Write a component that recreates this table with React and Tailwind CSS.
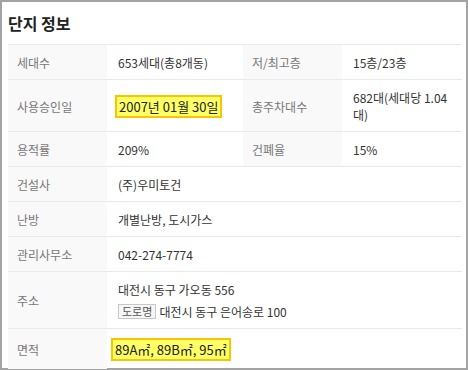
import React from "react"

const font = { fontFamily: '"Noto Sans CJK KR", "Noto Sans", sans-serif' }

const th = "bg-[#f9f9f9] pl-[9px] pr-2 pt-[9px] pb-[8px] text-left font-normal text-[#777] align-middle"
const td = "pl-[11px] pr-2 pt-[9px] pb-[8px] text-[#333] align-middle"

// highlighted value chip
function Mark({ children }) {
  return (
    <span className="inline-block border-2 border-[#f7c600] bg-[#ffff66] px-[2px] text-[13px] leading-[19px] text-[#222]">
      {children}
    </span>
  )
}

export default function App() {
  return (
    <div className="h-[370px] w-[468px] border-2 border-[#a3a3a3] bg-white" style={font}>
      <div className="px-[6px]">
        <h2 className="flex h-[42px] items-center text-[16px] font-bold text-[#222]">단지 정보</h2>
        <table className="w-[454px] table-fixed border-collapse text-[12px] leading-[17px]">
          <colgroup>
            <col className="w-[99px]" />
            <col className="w-[136px]" />
            <col className="w-[99px]" />
            <col className="w-[120px]" />
          </colgroup>
          <tbody>
            <tr className="border-y border-[#e9e9e9]">
              <th className={th}>세대수</th>
              <td className={td}>653세대(총8개동)</td>
              <th className={th}>저/최고층</th>
              <td className={td}>15층/23층</td>
            </tr>
            <tr className="border-b border-[#e9e9e9]">
              <th className={th}>사용승인일</th>
              <td className="pl-[8px] pt-[9px] pb-[8px] align-middle"><Mark>2007년 01월 30일</Mark></td>
              <th className={th}>총주차대수</th>
              <td className={td}>682대(세대당 1.04<br />대)</td>
            </tr>
            <tr className="border-b border-[#e9e9e9]">
              <th className={th}>용적률</th>
              <td className={td}>209%</td>
              <th className={th}>건폐율</th>
              <td className={td}>15%</td>
            </tr>
            <tr className="border-b border-[#e9e9e9]">
              <th className={th}>건설사</th>
              <td className={td} colSpan={3}>(주)우미토건</td>
            </tr>
            <tr className="border-b border-[#e9e9e9]">
              <th className={th}>난방</th>
              <td className={td} colSpan={3}>개별난방, 도시가스</td>
            </tr>
            <tr className="border-b border-[#e9e9e9]">
              <th className={th}>관리사무소</th>
              <td className={td} colSpan={3}>042-274-7774</td>
            </tr>
            <tr className="border-b border-[#e9e9e9]">
              <th className={th}>주소</th>
              <td className={td} colSpan={3}>
                <div>대전시 동구 가오동 556</div>
                <div className="mt-[5px] flex items-center gap-[3px]">
                  <span className="inline-block border border-[#c8c8c8] bg-[#f6f6f6] px-[3px] text-[11px] leading-[13px] text-[#555]">도로명</span>
                  <span>대전시 동구 은어송로 100</span>
                </div>
              </td>
            </tr>
            <tr>
              <th className={th}>면적</th>
              <td className="pl-[4px] pt-[9px] pb-[8px] align-middle" colSpan={3}><Mark>89A㎡, 89B㎡, 95㎡</Mark></td>
            </tr>
          </tbody>
        </table>
      </div>
    </div>
  )
}
